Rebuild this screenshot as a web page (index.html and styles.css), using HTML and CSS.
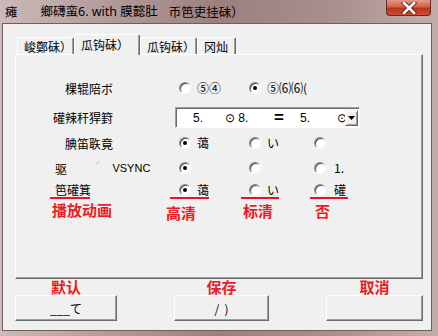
FILE: index.html
```html
<!DOCTYPE html>
<html>
<head>
<meta charset="utf-8">
<link rel="stylesheet" href="styles.css">
</head>
<body>
<div class="window">
  <div class="titlebar">
    <span class="t-icon">瘫</span>
    <span class="t-main">鄉礴蛮6. with 膜懿肚</span>
    <span class="t-sub">币笆吏挂砞）</span>
    <div class="close">
      <svg width="16" height="12" viewBox="0 0 16 12"><path d="M3 1 L13 11 M13 1 L3 11" stroke="#5a2018" stroke-width="4.4" stroke-linecap="square"/><path d="M3 1 L13 11 M13 1 L3 11" stroke="#fff" stroke-width="2.6" stroke-linecap="square"/></svg>
    </div>
  </div>
  <div class="client">
    <div class="tabs">
      <div class="tab tab1">峻鄭砞）</div>
      <div class="tab tab2 active">瓜钩砞）</div>
      <div class="tab tab3">瓜钩砞）</div>
      <div class="tab tab4">冈灿</div>
    </div>
    <div class="panel">
      <div class="grid">
        <div class="lbl r1 right">棵辊陪ボ</div>
        <div class="opt r1 c3"><span class="radio"></span><span class="otext">⑤④</span></div>
        <div class="opt r1 c4"><span class="radio on"></span><span class="otext">⑤⑹⑹(</span></div>

        <div class="lbl r2 right">礶辣秆猂篈</div>
        <div class="combo r2">
          <span class="cv v1">5.</span>
          <span class="cv v2">⊙ 8.</span>
          <span class="cv v3">=</span>
          <span class="cv v4">5.</span>
          <span class="cv v5">⊙</span>
          <span class="drop"><svg width="7" height="4" viewBox="0 0 7 4"><path d="M0 0 H7 L3.5 4 Z" fill="#000"/></svg></span>
        </div>

        <div class="lbl r3 right">腆笛聅竟</div>
        <div class="opt r3 c3"><span class="radio on"></span><span class="otext">蔼</span></div>
        <div class="opt r3 c4"><span class="radio"></span><span class="otext">い</span></div>
        <div class="opt r3 c5"><span class="radio"></span></div>

        <div class="lbl r4 left"><span>驱</span><span class="tick">ˊ</span><span class="vsync">VSYNC</span></div>
        <div class="opt r4 c3"><span class="radio on"></span></div>
        <div class="opt r4 c4"><span class="radio"></span></div>
        <div class="opt r4 c5"><span class="radio"></span><span class="otext t5">1.</span></div>

        <div class="lbl r5 left"><span class="mark mark-l">笆礶箕</span></div>
        <div class="opt r5 c3"><span class="mark mark-a"><span class="radio on"></span><span class="otext">蔼</span></span></div>
        <div class="opt r5 c4"><span class="mark mark-b"><span class="radio"></span><span class="otext">い</span></span></div>
        <div class="opt r5 c5"><span class="mark mark-c"><span class="radio"></span><span class="otext t5">礶</span></span></div>

        <div class="note r6 c1 n-play">播放动画</div>
        <div class="note r6 c3 n-hi">高清</div>
        <div class="note r6 c4 n-std">标清</div>
        <div class="note r6 c5 n-no">否</div>
      </div>
    </div>
    <div class="actions">
      <div class="act act1"><span class="note">默认</span><div class="btn">___て</div></div>
      <div class="act act2"><span class="note">保存</span><div class="btn">/&nbsp;&nbsp;)</div></div>
      <div class="act act3"><span class="note">取消</span><div class="btn"></div></div>
    </div>
  </div>
</div>
</body>
</html>
```

FILE: styles.css
```css
html, body {
  margin: 0;
  padding: 0;
}
body {
  width: 438px;
  height: 336px;
  overflow: hidden;
  font-family: "Noto Sans CJK SC", "Noto Sans", sans-serif;
  font-size: 12px;
  color: #000;
}
.window {
  width: 438px;
  height: 336px;
  box-sizing: border-box;
  display: flex;
  flex-direction: column;
  padding: 0 6px 5px 2px;
  background: linear-gradient(90deg, #cdb9b9 0%, #b39a9a 25%, #9c8080 50%, #a88e8e 75%, #c2adad 100%);
}
.titlebar {
  height: 23px;
  flex: none;
  display: flex;
  align-items: flex-start;
  font-size: 12.5px;
  line-height: 16px;
  color: #000;
}
.t-icon {
  margin-left: 3px;
  margin-top: 4px;
}
.t-main {
  margin-left: 23px;
  margin-top: 4px;
  font-family: "Noto Sans", "Noto Sans CJK SC", sans-serif;
}
.t-sub {
  margin-left: 11px;
  margin-top: 4px;
}
.close {
  margin-left: auto;
  margin-right: 1px;
  width: 45px;
  height: 16px;
  box-sizing: border-box;
  border: 1px solid #6a2a22;
  border-top: none;
  border-radius: 0 0 4px 4px;
  background: linear-gradient(180deg, #e39a88 0%, #d4614a 45%, #bb3218 55%, #c8503a 100%);
  display: flex;
  align-items: center;
  justify-content: center;
}
.client {
  flex: 1;
  background: #f0f0f0;
  border: 1px solid #6e5e5e;
  display: flex;
  flex-direction: column;
  padding: 10px 8px 9px 12px;
}
.tabs {
  height: 20px;
  display: flex;
  align-items: flex-end;
  padding-left: 2px;
  position: relative;
  z-index: 1;
}
.tab {
  box-sizing: border-box;
  height: 17px;
  padding: 1px 0 0 6px;
  line-height: 15px;
  border-top: 1px solid #fff;
  border-left: 1px solid #fff;
  border-right: 1px solid #696969;
  box-shadow: inset -1px 0 #a0a0a0;
  border-radius: 2px 2px 0 0;
  background: #f0f0f0;
}
.tab1 { width: 57px; }
.tab2 { width: 66px; }
.tab3 { width: 57px; }
.tab4 { width: 39px; }
.tab.active {
  height: 21px;
  margin-bottom: -1px;
  padding-top: 2px;
}
.panel {
  height: 225px;
  box-sizing: border-box;
  border-top: 1px solid #fff;
  border-left: 1px solid #fff;
  border-right: 1px solid #696969;
  border-bottom: 1px solid #696969;
  box-shadow: inset -1px -1px #a0a0a0;
  padding: 19px 0 0 34px;
}
.grid {
  display: grid;
  grid-template-columns: 63px 66px 70px 65px 1fr;
  grid-template-rows: 28px 31px 20px 30px 16px 20px;
  align-items: center;
}
.r1 { grid-row: 1; }
.r2 { grid-row: 2; }
.r3 { grid-row: 3; }
.r4 { grid-row: 4; }
.r5 { grid-row: 5; }
.r6 { grid-row: 6; }
.c1 { grid-column: 1; }
.c3 { grid-column: 3; }
.c4 { grid-column: 4; }
.c5 { grid-column: 5; }
.lbl {
  grid-column: 1;
  line-height: 15px;
  white-space: nowrap;
}
.lbl.right { text-align: right; }
.lbl.left { padding-left: 5px; grid-column: 1 / span 2; display: flex; align-items: center; }
.tick {
  color: #b0b0b0;
  font-size: 9px;
  margin-left: 28px;
  margin-top: -6px;
}
.vsync {
  font-family: "Liberation Sans", Arial, sans-serif;
  font-size: 11px;
  margin-left: 12px;
}
.opt {
  display: flex;
  align-items: center;
  line-height: 14px;
  white-space: nowrap;
}
.radio {
  width: 12px;
  height: 12px;
  box-sizing: border-box;
  border-radius: 50%;
  border: 1px solid;
  border-color: #8a8a8a #fafafa #fafafa #8a8a8a;
  box-shadow: inset 1px 1px #505050;
  background: #fff;
  display: flex;
  align-items: center;
  justify-content: center;
  flex: none;
}
.radio.on::after {
  content: "";
  width: 4px;
  height: 4px;
  border-radius: 50%;
  background: #000;
}
.otext {
  margin-left: 6px;
}
.otext.t5 { margin-left: 8px; }
.combo {
  grid-column: 3 / span 3;
  margin-left: -4px;
  width: 185px;
  height: 21px;
  box-sizing: border-box;
  border: 1px solid;
  border-color: #a0a0a0 #fff #fff #a0a0a0;
  box-shadow: inset 1px 1px #696969;
  background: #fff;
  display: flex;
  align-items: center;
  font-family: "Liberation Sans", Arial, sans-serif;
  font-size: 12px;
  padding: 1px 0 0 1px;
}
.cv { flex: none; white-space: nowrap; }
.v1 { margin-left: 16px; width: 32px; }
.v2 { width: 49px; }
.v3 { width: 26px; font-weight: bold; font-size: 17px; }
.v4 { width: 37px; }
.v5 { width: 8px; }
.drop {
  margin-left: auto;
  width: 16px;
  height: 16px;
  box-sizing: border-box;
  margin-right: 1px;
  background: #f0f0f0;
  border: 1px solid;
  border-color: #f0f0f0 #696969 #696969 #f0f0f0;
  box-shadow: inset 1px 1px #fff, inset -1px -1px #a0a0a0;
  display: flex;
  align-items: center;
  justify-content: center;
}
.mark {
  display: flex;
  align-items: center;
  border-bottom: 2px solid #e8132a;
  line-height: 14px;
  padding-bottom: 0;
}
.mark-l { padding-left: 5px; margin-left: -5px; width: 35px; }
.mark-a { margin-left: -9px; padding-left: 9px; padding-right: 0; }
.mark-b { margin-left: -8px; padding-left: 8px; padding-right: 0; }
.mark-c { margin-left: -4px; padding-left: 4px; padding-right: 2px; }
.note {
  color: #ec1c24;
  font-weight: bold;
  font-size: 15px;
  line-height: 16px;
  white-space: nowrap;
}
.n-play { margin-left: 2px; margin-top: 2px; }
.n-hi { margin-left: -13px; margin-top: 8px; }
.n-std { margin-left: -6px; margin-top: 4px; }
.n-no { margin-left: 1px; margin-top: 4px; }
.actions {
  display: flex;
  justify-content: space-between;
}
.act {
  display: flex;
  flex-direction: column;
  align-items: center;
}
.act .note { height: 16px; }
.act1 { width: 102px; }
.act2 { width: 95px; }
.act3 { width: 97px; }
.btn {
  align-self: stretch;
  height: 26px;
  box-sizing: border-box;
  border: 1px solid;
  border-color: #fff #696969 #696969 #fff;
  box-shadow: inset -1px -1px #a0a0a0;
  background: #f0f0f0;
  display: flex;
  align-items: center;
  justify-content: center;
  font-size: 12px;
  font-family: "Noto Sans CJK SC", "Noto Sans", sans-serif;
}
```
